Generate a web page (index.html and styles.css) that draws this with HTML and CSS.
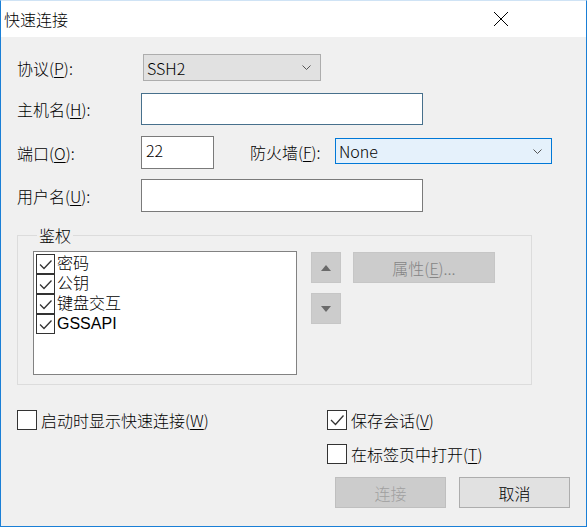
FILE: index.html
```html
<!DOCTYPE html>
<html lang="zh-CN">
<head>
<meta charset="utf-8">
<title>快速连接</title>
<link rel="stylesheet" href="styles.css">
</head>
<body>
<div class="window">
  <div class="titlebar">
    <span class="title">快速连接</span>
    <svg class="close" width="16" height="16" viewBox="0 0 16 16"><path d="M1 1 L15 15 M15 1 L1 15" stroke="#000" stroke-width="1" fill="none"/></svg>
  </div>
  <div class="body">
    <div class="row r1">
      <span class="lbl">协议(<u>P</u>):</span>
      <div class="select proto"><span>SSH2</span><svg class="chev" width="9" height="5" viewBox="0 0 9 5"><path d="M0.5 0.5 L4.5 4.5 L8.5 0.5" stroke="#555" fill="none"/></svg></div>
    </div>
    <div class="row r2">
      <span class="lbl">主机名(<u>H</u>):</span>
      <div class="input host"></div>
    </div>
    <div class="row r3">
      <span class="lbl">端口(<u>O</u>):</span>
      <div class="input port">22</div>
      <span class="fwlbl">防火墙(<u>F</u>):</span>
      <div class="select fw"><span>None</span><svg class="chev" width="9" height="5" viewBox="0 0 9 5"><path d="M0.5 0.5 L4.5 4.5 L8.5 0.5" stroke="#555" fill="none"/></svg></div>
    </div>
    <div class="row r4">
      <span class="lbl">用户名(<u>U</u>):</span>
      <div class="input user"></div>
    </div>

    <fieldset class="group">
      <legend>鉴权</legend>
      <div class="group-inner">
        <div class="listbox">
          <div class="item"><span class="cb"><svg width="17" height="17" viewBox="0 0 17 17"><path d="M3 8.5 L7 12.5 L14.5 4.5" stroke="#333" stroke-width="1.3" fill="none"/></svg></span><span class="itxt">密码</span></div>
          <div class="item"><span class="cb"><svg width="17" height="17" viewBox="0 0 17 17"><path d="M3 8.5 L7 12.5 L14.5 4.5" stroke="#333" stroke-width="1.3" fill="none"/></svg></span><span class="itxt">公钥</span></div>
          <div class="item"><span class="cb"><svg width="17" height="17" viewBox="0 0 17 17"><path d="M3 8.5 L7 12.5 L14.5 4.5" stroke="#333" stroke-width="1.3" fill="none"/></svg></span><span class="itxt">键盘交互</span></div>
          <div class="item"><span class="cb"><svg width="17" height="17" viewBox="0 0 17 17"><path d="M3 8.5 L7 12.5 L14.5 4.5" stroke="#333" stroke-width="1.3" fill="none"/></svg></span><span class="itxt">GSSAPI</span></div>
        </div>
        <div class="arrows">
          <div class="btn sq"><svg width="10" height="6" viewBox="0 0 10 6"><path d="M0 6 L5 0 L10 6 Z" fill="#6a6a6a"/></svg></div>
          <div class="btn sq"><svg width="10" height="6" viewBox="0 0 10 6"><path d="M0 0 L10 0 L5 6 Z" fill="#6a6a6a"/></svg></div>
        </div>
        <div class="btn props">属性(<u>E</u>)...</div>
      </div>
    </fieldset>

    <div class="bottom">
      <div class="check"><span class="box"></span><span>启动时显示快速连接(<u>W</u>)</span></div>
      <div class="right">
        <div class="check"><span class="box"><svg width="18" height="18" viewBox="0 0 18 18"><path d="M3 9 L7.5 13.5 L15.5 4.5" stroke="#333" stroke-width="1.3" fill="none"/></svg></span><span>保存会话(<u>V</u>)</span></div>
        <div class="check c2"><span class="box"></span><span>在标签页中打开(<u>T</u>)</span></div>
        <div class="buttons">
          <div class="btn action disabled">连接</div>
          <div class="btn action">取消</div>
        </div>
      </div>
    </div>
  </div>
</div>
</body>
</html>
```
FILE: styles.css
```css
html, body {
  margin: 0;
  padding: 0;
  background: #f0f0f0;
}
body {
  font-family: "Noto Sans CJK SC", "Noto Sans", sans-serif;
  font-size: 16px;
  font-weight: 300;
  color: #000;
}
u { text-decoration: underline; text-underline-offset: 2px; text-decoration-thickness: 1px; }

.window {
  width: 587px;
  height: 527px;
  box-sizing: border-box;
  border: 1px solid #1a7fd6;
  border-top-color: #cfe3f5;
  background: #f0f0f0;
  display: flex;
  flex-direction: column;
}
.titlebar {
  height: 36px;
  flex: none;
  background: #fff;
  display: flex;
  align-items: center;
  justify-content: space-between;
  padding-left: 3px;
  padding-right: 77px;
}
.title { font-size: 16px; line-height: 20px; margin-top: -1px; }

.body {
  padding: 17px 0 0 16px;
}
.row {
  display: flex;
  align-items: center;
}
.lbl {
  width: 124px;
  flex: none;
  line-height: 20px;
}
.r1 { height: 27px; }
.r2 { height: 32px; margin-top: 12px; }
.r3 { height: 33px; margin-top: 11px; }
.r4 { height: 33px; margin-top: 10px; }

.select {
  box-sizing: border-box;
  height: 27px;
  display: flex;
  align-items: center;
  justify-content: space-between;
  padding: 0 9px 0 3px;
  line-height: 20px;
}
.proto {
  width: 178px;
  margin-left: 2px;
  background: #e1e1e1;
  border: 1px solid #adadad;
}
.fw {
  width: 217px;
  height: 26px;
  margin-top: -3px;
  background: #e5f1fb;
  border: 1px solid #0078d7;
  padding-right: 9px;
}
.input {
  box-sizing: border-box;
  background: #fff;
  border: 1px solid #7a7a7a;
  height: 100%;
}
.host { width: 282px; border-color: #47708c; }
.user { width: 282px; }
.port {
  width: 73px;
  padding: 2px 0 0 4px;
  line-height: 22px;
  align-self: stretch;
}
.fwlbl {
  margin-left: 36px;
  width: 85px;
  line-height: 20px;
  margin-top: -2px;
}

.group {
  margin: 14px 0 0 0;
  padding: 7px 0 9px 15px;
  width: 515px;
  box-sizing: border-box;
  border: 1px solid #dcdcdc;
  min-width: 0;
}
.group legend {
  padding: 0 2px;
  margin-left: 4px;
  line-height: 18px;
  font-size: 16px;
  margin-top: -2px;
}
.group-inner {
  display: flex;
  align-items: flex-start;
}
.listbox {
  width: 264px;
  height: 124px;
  box-sizing: border-box;
  border: 1px solid #828282;
  background: #fff;
  padding: 2px 0 0 2px;
}
.item {
  height: 20px;
  display: flex;
  align-items: center;
}
.itxt {
  font-family: "Liberation Sans", "Noto Sans CJK SC", sans-serif;
  font-size: 16px;
  line-height: 20px;
}
.cb {
  width: 19px;
  height: 20px;
  box-sizing: border-box;
  border: 1px solid #333;
  margin-right: 2px;
  display: flex;
  align-items: center;
  justify-content: center;
  background: #fff;
}

.arrows {
  margin-left: 14px;
  margin-top: 1px;
  display: flex;
  flex-direction: column;
  gap: 10px;
}
.btn {
  box-sizing: border-box;
  display: flex;
  align-items: center;
  justify-content: center;
  line-height: 20px;
}
.sq {
  width: 30px;
  height: 31px;
  background: #cccccc;
  border: 1px solid #c6c6c6;
}
.props {
  margin-left: 12px;
  margin-top: 1px;
  width: 142px;
  height: 31px;
  background: #cccccc;
  border: 1px solid #c6c6c6;
  color: #858585;
}

.bottom {
  display: flex;
  margin-top: 25px;
}
.check {
  display: flex;
  align-items: center;
  height: 20px;
  line-height: 20px;
}
.box {
  width: 20px;
  height: 20px;
  box-sizing: border-box;
  border: 1px solid #333;
  background: #fff;
  margin-right: 4px;
  flex: none;
  display: flex;
  align-items: center;
  justify-content: center;
}
.bottom > .check { width: 310px; }
.right {
  display: flex;
  flex-direction: column;
}
.c2 { margin-top: 14px; }
.buttons {
  display: flex;
  gap: 13px;
  margin-top: 13px;
  margin-left: 8px;
}
.action {
  width: 111px;
  height: 31px;
  background: #e1e1e1;
  border: 1px solid #adadad;
}
.action.disabled {
  background: #cccccc;
  border-color: #bfbfbf;
  color: #a0a0a0;
}
```
